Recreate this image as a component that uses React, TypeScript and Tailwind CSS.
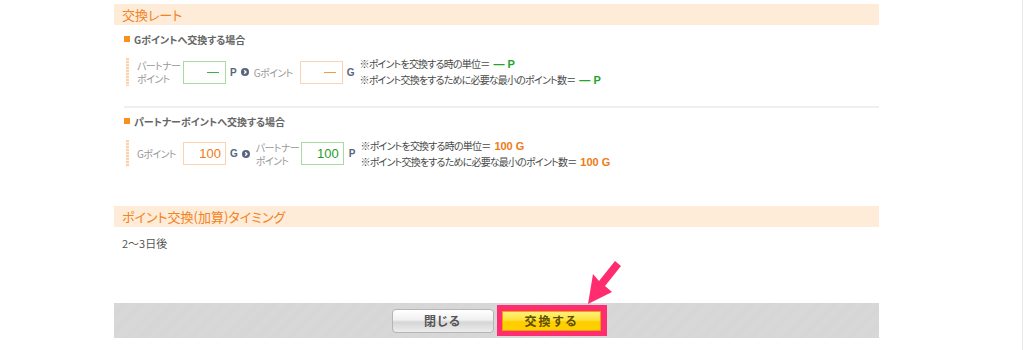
import React from 'react';

const jp = "font-['Noto_Sans_CJK_JP','Noto_Sans',sans-serif] [font-feature-settings:'palt']";

const Stripe = () => (
  <div className="w-[3px] self-stretch bg-[repeating-linear-gradient(180deg,#fbd2ae_0_2px,#fff1e4_2px_3px)]" />
);

const Arrow = () => (
  <svg width="8" height="8" viewBox="0 0 8 8" className="shrink-0">
    <circle cx="4" cy="4" r="4" fill="#56657a" />
    <path d="M3.2 2.3 L5 4 L3.2 5.7" stroke="#fff" strokeWidth="1.3" fill="none" />
  </svg>
);

const Box: React.FC<{ tone: 'green' | 'orange'; value?: string }> = ({ tone, value }) => {
  const border = tone === 'green' ? 'border-[#a9dba0]' : 'border-[#fbd2b2]';
  const text = tone === 'green' ? 'text-[#1f9e1f]' : 'text-[#f07a14]';
  return (
    <div className={`w-[43px] h-[23px] shrink-0 border ${border} flex items-center justify-end pr-[4px]`}>
      {value ? (
        <span className={`text-[13px] leading-none ${text} font-['Liberation_Sans',sans-serif]`}>{value}</span>
      ) : (
        <span className={`w-[12px] h-[1px] ${tone === 'green' ? 'bg-[#3cb043]' : 'bg-[#f39a45]'} mr-[2px]`} />
      )}
    </div>
  );
};

const Unit: React.FC<{ children: React.ReactNode; className?: string }> = ({ children, className }) => (
  <span className={`text-[10px] font-bold text-[#56657a] font-['Liberation_Sans',sans-serif] ${className ?? ''}`}>{children}</span>
);

const label = 'text-[10px] tracking-[-0.6px] text-[#999] whitespace-nowrap';

const TwoLine = () => (
  <div className={`${label} leading-[13px]`}>
    <div>パートナー</div>
    <div>ポイント</div>
  </div>
);

const Notes: React.FC<{ value: string; tone: 'green' | 'orange' }> = ({ value, tone }) => {
  const color = tone === 'green' ? 'text-[#22a52a]' : 'text-[#f07a14]';
  const v = (
    <span className={`text-[11px] font-bold tracking-normal ${color} ml-[4px] font-['Liberation_Sans','Noto_Sans_CJK_JP',sans-serif]`}>{value}</span>
  );
  return (
    <div className="text-[10px] tracking-[-0.8px] leading-[15px] text-[#4a4a4a] ml-[5px] flex flex-col whitespace-nowrap">
      <div>※ポイントを交換する時の単位＝{v}</div>
      <div>※ポイント交換をするために必要な最小のポイント数＝{v}</div>
    </div>
  );
};

const SubHead: React.FC<{ children: React.ReactNode }> = ({ children }) => (
  <div className="flex items-center h-[12px] ml-[10px]">
    <span className="w-[6px] h-[6px] bg-[#f7911e] mr-[4px]" />
    <span className="text-[10px] font-bold text-[#666]">{children}</span>
  </div>
);

const SectionHead: React.FC<{ children: React.ReactNode }> = ({ children }) => (
  <div className="h-[21px] bg-[#feecd9] flex items-center pl-[8px] text-[13px] text-[#f28222]">{children}</div>
);

export default function App() {
  return (
    <div className={`w-[1023px] h-[350px] bg-white border-r border-[#e8e8e8] overflow-hidden ${jp}`}>
      <div className="ml-[114px] w-[765px] flex flex-col">
        <div className="mt-[4px]">
          <SectionHead>交換レート</SectionHead>
        </div>

        <div className="mt-[8px]">
          <SubHead>Gポイントへ交換する場合</SubHead>
        </div>

        <div className="flex items-center mt-[13px] h-[28px] ml-[12px]">
          <Stripe />
          <div className="ml-[8px] w-[46px]">
            <TwoLine />
          </div>
          <Box tone="green" />
          <Unit className="ml-[4px]">P</Unit>
          <span className="ml-[4px]"><Arrow /></span>
          <span className={`ml-[5px] w-[46px] ${label}`}>Gポイント</span>
          <Box tone="orange" />
          <Unit className="ml-[4px]">G</Unit>
          <Notes value="― P" tone="green" />
        </div>

        <div className="mt-[20px] ml-[10px] h-[2px] bg-[#efefef]" />

        <div className="mt-[7px]">
          <SubHead>パートナーポイントへ交換する場合</SubHead>
        </div>

        <div className="flex items-center mt-[13px] h-[27px] ml-[12px]">
          <Stripe />
          <span className={`ml-[8px] w-[46px] ${label}`}>Gポイント</span>
          <Box tone="orange" value="100" />
          <Unit className="ml-[4px]">G</Unit>
          <span className="ml-[4px]"><Arrow /></span>
          <div className="ml-[6px] w-[45px]">
            <TwoLine />
          </div>
          <Box tone="green" value="100" />
          <Unit className="ml-[5px]">P</Unit>
          <Notes value="100 G" tone="orange" />
        </div>

        <div className="mt-[39px]">
          <SectionHead>ポイント交換(加算)タイミング</SectionHead>
        </div>

        <div className="mt-[9px] ml-[8px] text-[11px] leading-[14px] text-[#555]">2〜3日後</div>

        <div className="relative mt-[53px] h-[35px] bg-[#d7d7d7] bg-[repeating-linear-gradient(135deg,#d9d9d9_0_1px,#d5d5d5_1px_2px)] flex items-center justify-center">
          <div className="flex items-center gap-[3px] ml-[5px]">
            <button className="w-[102px] h-[24px] rounded-[4px] border border-[#b5b5b5] bg-[linear-gradient(180deg,#ffffff_0%,#f0f0f0_45%,#d6d6d6_55%,#ececec_100%)] text-[12px] font-bold text-[#555] tracking-[1px]">
              閉じる
            </button>
            <div className="w-[110px] h-[31px] bg-[#ff2d6f] flex items-center justify-center">
              <button className="w-[99px] h-[20px] border border-[#f2a100] bg-[linear-gradient(180deg,#fff27a_0%,#ffe03a_45%,#ffcc00_55%,#ffd000_100%)] text-[12px] font-bold text-[#5e4f00] tracking-[2px]">
                交換する
              </button>
            </div>
          </div>
          <svg className="absolute left-[468px] top-[-42px]" width="40" height="46" viewBox="0 0 40 46">
            <path d="M6 43 L11 13 L17 20 L33 0 L39 5 L23 25 L30 31 Z" fill="#ff2d6f" />
          </svg>
        </div>
      </div>
    </div>
  );
}
